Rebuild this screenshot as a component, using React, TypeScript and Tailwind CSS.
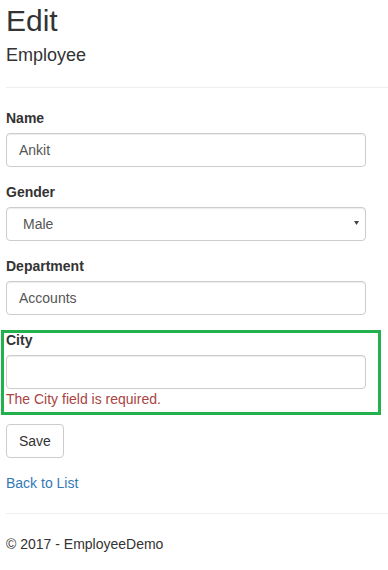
import React from "react";

const inputCls =
  "block w-[360px] h-[34px] px-[12px] py-[6px] text-[14px] leading-[20px] text-[#555] bg-white border border-[#ccc] rounded-[4px] shadow-[inset_0_1px_1px_rgba(0,0,0,0.075)] outline-none";
const labelCls = "block mb-[5px] text-[14px] leading-[20px] font-bold text-[#333]";

export default function App() {
  return (
    <div
      className="min-h-[570px] bg-white pl-[6px] text-[14px] leading-[20px] text-[#333]"
      style={{ fontFamily: '"Liberation Sans", Arial, sans-serif' }}
    >
      <h2 className="pt-[4px] text-[30px] leading-[33px] font-normal text-[#333]">Edit</h2>
      <h4 className="mt-[9px] text-[18px] leading-[19.8px] font-normal text-[#333]">Employee</h4>
      <hr className="mt-[21px] mb-[20px] border-0 border-t border-[#eee]" />

      <div className="mb-[15px]">
        <label className={labelCls}>Name</label>
        <input className={inputCls} defaultValue="Ankit" />
      </div>

      <div className="mb-[15px]">
        <label className={labelCls}>Gender</label>
        <div className="relative">
          <div className={inputCls + " pl-[16px]"}>Male</div>
          <svg
            className="absolute left-[348px] top-[14px]"
            width="5"
            height="4"
            viewBox="0 0 5 4"
          >
            <path d="M0 0H5L2.5 4Z" fill="#444" />
          </svg>
        </div>
      </div>

      <div className="mb-[15px]">
        <label className={labelCls}>Department</label>
        <input className={inputCls} defaultValue="Accounts" />
      </div>

      <div className="relative mb-[15px]">
        <label className={labelCls}>City</label>
        <input className={inputCls} defaultValue="" />
        <span className="block text-[#a94442]">The City field is required.</span>
        <div className="pointer-events-none absolute left-[-5px] top-0 w-[380px] h-[85px] border-[3px] border-[#22b14c]" />
      </div>

      <div className="mb-[15px]">
        <button className="h-[34px] px-[12px] py-[6px] text-[14px] leading-[20px] text-[#333] bg-white border border-[#ccc] rounded-[4px]">
          Save
        </button>
      </div>

      <div>
        <a className="text-[#337ab7]" href="#">
          Back to List
        </a>
      </div>

      <hr className="mt-[20px] mb-[20px] border-0 border-t border-[#eee]" />
      <footer>
        <p>© 2017 - EmployeeDemo</p>
      </footer>
    </div>
  );
}
